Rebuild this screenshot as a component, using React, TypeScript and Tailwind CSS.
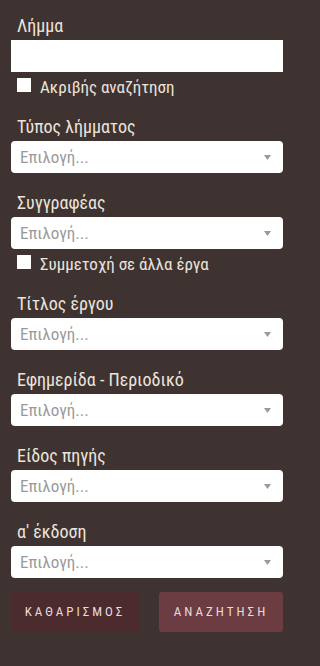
import React from "react";

const font = { fontFamily: '"Roboto Condensed", "Liberation Sans Narrow", "DejaVu Sans Condensed", Roboto, sans-serif' };

function Label({ children }: { children: React.ReactNode }) {
  return (
    <div className="h-[20px] mb-1 px-[6px] text-[18px] leading-[20px] text-[#ece4dc] whitespace-nowrap">{children}</div>
  );
}

function Select() {
  return (
    <div className="h-[32px] bg-white rounded-[4px] flex items-center justify-between pl-[9px] pr-[12px]">
      <span className="text-[17px] leading-[20px] text-[#9a9a9a]">Επιλογή...</span>
      <svg width="7" height="5" viewBox="0 0 7 5">
        <path d="M0 0 L7 0 L3.5 5 Z" fill="#9b9b9b" />
      </svg>
    </div>
  );
}

function Check({ children }: { children: React.ReactNode }) {
  return (
    <div className="h-[20px] mt-[5px] mb-[5px] px-[6px] flex items-start gap-[9px]">
      <span className="w-[14px] h-[14px] mt-[1px] bg-white block shrink-0" />
      <span className="text-[17px] leading-[20px] text-[#ece4dc] whitespace-nowrap">{children}</span>
    </div>
  );
}

function Group({ label, children }: { label: string; children?: React.ReactNode }) {
  return (
    <div className="mb-[20px]">
      <Label>{label}</Label>
      <Select />
      {children}
    </div>
  );
}

export default function App() {
  return (
    <div className="w-full min-h-[666px] bg-[#3e3331]" style={font}>
      <div className="w-[299px] pt-[16px] pl-[11px] pr-[16px] pb-[24px]">
        <div className="mb-[20px]">
          <Label>Λήμμα</Label>
          <div className="h-[32px] bg-white" />
          <Check>Ακριβής αναζήτηση</Check>
        </div>
        <Group label="Τύπος λήμματος" />
        <Group label="Συγγραφέας">
          <Check>Συμμετοχή σε άλλα έργα</Check>
        </Group>
        <Group label="Τίτλος έργου" />
        <Group label="Εφημερίδα - Περιοδικό" />
        <Group label="Είδος πηγής" />
        <div>
          <Label>α' έκδοση</Label>
          <Select />
        </div>
        <div className="mt-[14px] flex justify-between">
          <button className="w-[128px] h-[40px] bg-[#4b2b2e] rounded-[3px] text-[13px] tracking-[3px] text-[#eadada]">
            ΚΑΘΑΡΙΣΜΟΣ
          </button>
          <button className="w-[124px] h-[40px] bg-[#6b3c42] rounded-[3px] text-[13px] tracking-[3px] text-[#eadada]">
            ΑΝΑΖΗΤΗΣΗ
          </button>
        </div>
      </div>
    </div>
  );
}
